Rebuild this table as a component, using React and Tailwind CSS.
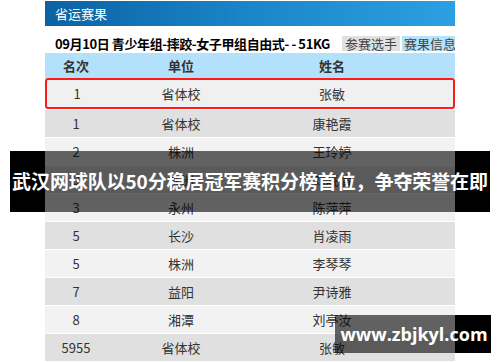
const FONT = { fontFamily: '"Noto Sans CJK SC", "Noto Sans", sans-serif' }

const rows = [
  ['1', '省体校', '康艳霞'],
  ['2', '株洲', '王玲婷'],
  ['3', '株洲', '刘晓倩'],
  ['3', '永州', '陈萍萍'],
  ['5', '长沙', '肖凌雨'],
  ['5', '株洲', '李琴琴'],
  ['7', '益阳', '尹诗雅'],
  ['8', '湘潭', '刘亭汝'],
  ['5955', '省体校', '张敏'],
]

function Cells({ r }) {
  return (
    <>
      <span className="text-center">{r[0]}</span>
      <span className="text-center">{r[1]}</span>
      <span className="text-center">{r[2]}</span>
      <span />
    </>
  )
}

export default function App() {
  return (
    <div className="relative w-[500px] h-[362px] overflow-hidden bg-white text-[#333]" style={FONT}>
      <div className="ml-[45px] w-[410px] pt-[1px] overflow-hidden">
        {/* top bar */}
        <div className="h-[25px] flex items-center pl-[10px] bg-gradient-to-r from-[#0b62a2] via-[#1a86c9] to-[#2ba0e2] text-white text-[13px] leading-none">
          省运赛果
        </div>

        {/* title + tabs */}
        <div className="h-[27px] flex items-end pb-[2px] pl-[10px] whitespace-nowrap">
          <span className="w-[287px] flex-none text-[13px] font-bold text-black leading-[15px] tracking-[-0.4px]">09月10日 青少年组-摔跤-女子甲组自由式- - 51KG</span>
          <span className="flex-none w-[58px] h-[15px] bg-[#e1e1e1] text-[13px] leading-[15px] text-center text-[#444]">参赛选手</span>
          <span className="flex-none w-[58px] h-[15px] ml-[2px] bg-[#b6e2fb] text-[13px] leading-[15px] pl-[2px] text-[#444]">赛果信息</span>
        </div>

        {/* table header */}
        <div className="h-[25px] grid grid-cols-[62px_148px_154px_1fr] items-center bg-[#b3e1fb] text-[13px] font-bold">
          <Cells r={['名次', '单位', '姓名']} />
        </div>

        {/* highlighted row */}
        <div className="h-[31px] grid grid-cols-[60px_148px_154px_1fr] items-center bg-[#f0f0f0] border-2 border-[#ff1a1a] rounded-[3px] text-[13px]">
          <Cells r={['1', '省体校', '张敏']} />
        </div>

        {rows.map((r, i) => (
          <div key={i} className={`h-[27px] mt-[1px] grid grid-cols-[62px_148px_154px_1fr] items-center text-[13px] ${i % 2 === 0 ? 'bg-[#e0e0e0]' : 'bg-[#f2f2f2]'}`}>
            <Cells r={r} />
          </div>
        ))}
      </div>

      {/* headline banner */}
      <div className="absolute left-[10px] top-[151px] w-[480px] h-[61px] flex">
        <div className="w-[35px] bg-black" />
        <div className="w-[410px] bg-black/60" />
        <div className="w-[35px] bg-black" />
        <div className="absolute inset-0 flex items-center justify-center text-white text-[19px] font-bold whitespace-nowrap tracking-[-0.1px]">
          武汉网球队以50分稳居冠军赛积分榜首位，争夺荣誉在即
        </div>
      </div>

      {/* watermark */}
      <div className="absolute left-[335px] top-[315px] w-[156px] h-[38px] flex">
        <div className="w-[120px] bg-black/60" />
        <div className="w-[36px] bg-black" />
        <div className="absolute inset-0 flex items-center justify-center pl-[2px] text-white text-[18px] font-bold" style={{ fontFamily: '"Open Sans", sans-serif' }}>
          www.zbjkyl.com
        </div>
      </div>
    </div>
  )
}
